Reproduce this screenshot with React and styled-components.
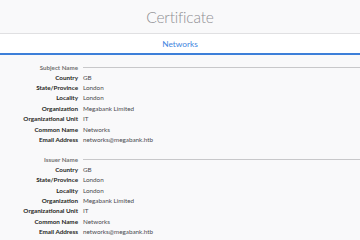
import styled, { createGlobalStyle } from "styled-components";

const GlobalStyle = createGlobalStyle`
  body {
    margin: 0;
    background-color: #f9f9fa;
    font-family: Lato, "Open Sans", sans-serif;
  }
`;

const sections = [
  {
    title: "Subject Name",
    rows: [
      ["Country", "GB"],
      ["State/Province", "London"],
      ["Locality", "London"],
      ["Organization", "Megabank Limited"],
      ["Organizational Unit", "IT"],
      ["Common Name", "Networks"],
      ["Email Address", "networks@megabank.htb"],
    ],
  },
  {
    title: "Issuer Name",
    rows: [
      ["Country", "GB"],
      ["State/Province", "London"],
      ["Locality", "London"],
      ["Organization", "Megabank Limited"],
      ["Organizational Unit", "IT"],
      ["Common Name", "Networks"],
      ["Email Address", "networks@megabank.htb"],
    ],
  },
];

export default function App() {
  return (
    <Page>
      <GlobalStyle />
      <Header>
        <h1>Certificate</h1>
      </Header>
      <Tabs>
        <Tab>Networks</Tab>
      </Tabs>
      <Content>
        {sections.map((section) => (
          <Section key={section.title}>
            <SectionTitle>
              <span>{section.title}</span>
              <Rule />
            </SectionTitle>
            {section.rows.map(([label, value]) => (
              <Row key={label}>
                <Label>{label}</Label>
                <Value>{value}</Value>
              </Row>
            ))}
          </Section>
        ))}
      </Content>
    </Page>
  );
}

const Page = styled.div`
  width: 360px;
  height: 240px;
  overflow: hidden;
  background-color: #f9f9fa;
`;

const Header = styled.div`
  height: 33px;
  display: flex;
  align-items: center;
  justify-content: center;
  border-bottom: 1px solid #e0e0e2;
  h1 {
    margin: 0;
    font-family: Lato, sans-serif;
    font-weight: 300;
    font-size: 15.5px;
    letter-spacing: -0.2px;
    color: #8f8f93;
    padding-top: 1px;
  }
`;

const Tabs = styled.div`
  height: 19px;
  background-color: #ffffff;
  display: flex;
  justify-content: center;
  align-items: center;
  border-bottom: 2px solid #3d7fd9;
`;

const Tab = styled.div`
  font-size: 8.3px;
  color: #4285e0;
  padding-top: 1px;
`;

const Content = styled.div`
  padding-top: 8.5px;
  display: flex;
  flex-direction: column;
  gap: 11px;
`;

const Section = styled.div`
  display: flex;
  flex-direction: column;
`;

const SectionTitle = styled.div`
  display: grid;
  grid-template-columns: 78px 1fr;
  column-gap: 5px;
  align-items: center;
  height: 8.5px;
  span {
    text-align: right;
    font-size: 6.2px;
    font-weight: 700;
    color: #737373;
    white-space: nowrap;
  }
`;

const Rule = styled.div`
  height: 1px;
  background-color: #c8c8ca;
`;

const Row = styled.div`
  display: grid;
  grid-template-columns: 78px 1fr;
  column-gap: 5px;
  align-items: center;
  height: 10.4px;
`;

const Label = styled.div`
  text-align: right;
  font-size: 6.3px;
  font-weight: 700;
  color: #1f1f22;
  white-space: nowrap;
`;

const Value = styled.div`
  font-size: 6.3px;
  color: #4a4a4f;
  white-space: nowrap;
`;
